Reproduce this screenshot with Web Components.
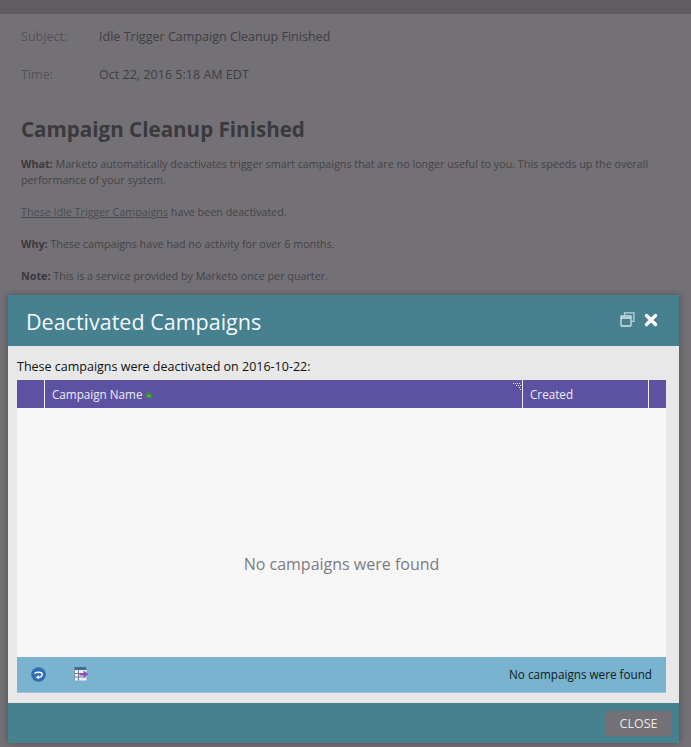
<!DOCTYPE html>
<html>
<head>
<meta charset="utf-8">
<title>Deactivated Campaigns</title>
<style>
  html, body { margin: 0; height: 747px; overflow: hidden; background: #737175; }
  body { font-family: "Open Sans", sans-serif; position: relative; }
</style>
</head>
<body>
<notification-page></notification-page>
<modal-dialog heading="Deactivated Campaigns">
  <campaign-grid note="These campaigns were deactivated on 2016-10-22:" empty="No campaigns were found"></campaign-grid>
</modal-dialog>

<script>
class NotificationPage extends HTMLElement {
  constructor() {
    super();
    this.shadowDOM = this.attachShadow({ mode: 'open' });
    this.shadowDOM.innerHTML = `
      <style>
      :host { display: block; color: #343336; }
      .top { height: 14px; background: #5f5d62; }
      .content { padding: 0 21px; }
      .meta { display: grid; grid-template-columns: 78px 1fr; row-gap: 20px; padding-top: 14px; font-size: 12.55px; line-height: 18px; }
      .label { color: #545257; }
      .value { color: #3f3e42; }
      h1 { margin: 31px 0 0; font-size: 20.6px; line-height: 28px; font-weight: 700; color: #3a393c; }
      p { margin: 0; font-size: 10.75px; line-height: 16px; color: #444347; }
      p b { font-weight: 700; color: #3a393c; }
      u { color: #4d4b52; }
      .first { margin-top: 13px; }
      .next { margin-top: 16px; }
      </style>
      <div class="top"></div>
      <div class="content">
        <div class="meta">
          <span class="label">Subject:</span><span class="value">Idle Trigger Campaign Cleanup Finished</span>
          <span class="label">Time:</span><span class="value">Oct 22, 2016 5:18 AM EDT</span>
        </div>
        <h1>Campaign Cleanup Finished</h1>
        <p class="first"><b>What:</b> Marketo automatically deactivates trigger smart campaigns that are no longer useful to you. This speeds up the overall performance of your system.</p>
        <p class="next"><u>These Idle Trigger Campaigns</u> have been deactivated.</p>
        <p class="next"><b>Why:</b> These campaigns have had no activity for over 6 months.</p>
        <p class="next"><b>Note:</b> This is a service provided by Marketo once per quarter.</p>
      </div>
    `;
  }
}

class ModalDialog extends HTMLElement {
  constructor() {
    super();
    this.shadowDOM = this.attachShadow({ mode: 'open' });
    this.shadowDOM.innerHTML = `
      <style>
      :host {
        position: absolute; left: 8px; top: 295px; width: 671px; height: 448px;
        display: flex; flex-direction: column;
        box-shadow: -2px 0 5px rgba(60,60,60,.35), 2px 0 5px rgba(60,60,60,.35);
      }
      header {
        height: 51px; flex: none; background: #47808f; color: #fff;
        display: flex; align-items: center; padding: 0 21px 0 18px;
      }
      h2 { flex: 1; margin: 0; font-size: 21.5px; font-weight: 400; line-height: 30px; color: #f2f8fa; position: relative; top: 1px; }
      .tools { display: flex; align-items: center; gap: 9px; position: relative; top: -1px; }
      svg { display: block; }
      .body { flex: 1; background: #e8e8e8; padding: 12px 13px 10px 9px; display: flex; min-height: 0; }
      footer {
        height: 40px; box-sizing: border-box; flex: none; background: #47808f;
        display: flex; justify-content: flex-end; align-items: flex-start; padding: 8px 7px 0 0;
      }
      button {
        width: 67px; height: 25px; border: 0; padding: 0; background: #737175; color: #e9e9e9;
        font: 12.5px "Open Sans", sans-serif; 
      }
      </style>
      <header>
        <h2></h2>
        <div class="tools">
          <svg width="15" height="15" viewBox="0 0 15 15" fill="none" stroke="#cfe3e8" stroke-width="1.3">
            <path d="M4.5 3V.9h9.4v8.4h-2.2" stroke="#b9d4db"/>
            <rect x="1" y="4" width="10" height="10" rx=".5"/>
            <path d="M1 6h10" stroke-width="1.6"/>
          </svg>
          <svg width="14" height="14" viewBox="0 0 14 14" stroke="#fff" stroke-width="3.4" stroke-linecap="round">
            <path d="M2.5 2.5l9 9M11.5 2.5l-9 9"/>
          </svg>
        </div>
      </header>
      <div class="body"><slot></slot></div>
      <footer><button>CLOSE</button></footer>
    `;
  }

  connectedCallback() {
    this.shadowDOM.querySelector('h2').textContent = this.getAttribute('heading');
  }
}

class CampaignGrid extends HTMLElement {
  constructor() {
    super();
    this.shadowDOM = this.attachShadow({ mode: 'open' });
  }

  connectedCallback() {
    this.render();
  }

  render() {
    const empty = this.getAttribute('empty');
    this.shadowDOM.innerHTML = `
      <style>
      :host { flex: 1; display: flex; flex-direction: column; font-family: "Open Sans", sans-serif; min-width: 0; }
      .note { font-size: 12.5px; line-height: 18px; height: 22px; color: #111; flex: none; }
      .head {
        flex: none; height: 28px; background: #5c52a1; color: #eeecf6; font-size: 11.7px;
        display: grid; grid-template-columns: 28px 1fr 126px 17px;
      }
      .col { display: flex; align-items: center; padding: 0 0 1px 7px; border-right: 1px solid #f0eff7; gap: 2px; position: relative; }
      .col:first-child { padding: 0; }
      .col:last-child { border-right: 0; }
      .resize { position: absolute; right: 0; top: 2px; }
      .sort { position: relative; top: 1px; }
      .empty {
        flex: 1; background: #f6f6f6; color: #7c7c7f; font-size: 16px;
        display: flex; align-items: center; justify-content: center; padding-top: 62px;
      }
      .bar {
        flex: none; height: 36px; background: #79b3cf; border-bottom: 1px solid #a7bcdc; box-sizing: border-box;
        display: flex; align-items: center; padding: 0 14px 1px 14px; color: #0f1c22; font-size: 11.7px;
      }
      .refresh { margin-right: 28px; }
      .spacer { flex: 1; }
      svg { display: block; }
      </style>
      <div class="note">${this.getAttribute('note')}</div>
      <div class="head">
        <div class="col"></div>
        <div class="col">Campaign Name
          <svg class="sort" width="8" height="8" viewBox="0 0 8 8"><path d="M4 .5L6 2.7H7.5V7H.5V2.7H2Z" fill="#3f8a3f"/><path d="M2.8 5h2.4" stroke="#9fcf94"/></svg>
          <svg class="resize" width="9" height="9" viewBox="0 0 9 9" fill="#e4e2f2">
            <rect x="0" y="1" width="1" height="1"/><rect x="2" y="1" width="1" height="1"/><rect x="4" y="1" width="1" height="1"/><rect x="6" y="1" width="1" height="1"/>
            <rect x="3" y="3" width="1" height="1"/><rect x="5" y="3" width="1" height="1"/><rect x="7" y="3" width="1" height="1"/>
            <rect x="6" y="5" width="1" height="1"/><rect x="7" y="7" width="1" height="1"/>
          </svg>
        </div>
        <div class="col">Created</div>
        <div class="col"></div>
      </div>
      <div class="empty">${empty}</div>
      <div class="bar">
        <svg class="refresh" width="15" height="15" viewBox="0 0 15 15">
          <circle cx="7.5" cy="7.5" r="7.3" fill="#2f6db5"/>
          <path d="M3.8 6.8C4 4.8 11 4.4 11.2 7.2 11.3 9.4 9 10.2 7.4 10.2" fill="none" stroke="#fff" stroke-width="1.5"/>
          <path d="M4.6 10.2L8 8.2V12.2Z" fill="#fff"/>
        </svg>
        <svg width="15" height="14" viewBox="0 0 15 14">
          <rect x=".5" y="0" width="12" height="13.5" fill="#eef0f4"/>
          <rect x=".5" y="0" width="12" height="3" fill="#3f6d94"/>
          <path d="M4.5 3v10.5M.5 6.5h12M.5 10h12" stroke="#6b7d8e" stroke-width="1"/>
          <path d="M0 0v13.5" stroke="#5b6f85" stroke-width="1"/>
          <path d="M5.5 6h4V3.6L14.5 7.2 9.5 10.8V8.4h-4Z" fill="#8c4fc0"/>
        </svg>
        <span class="spacer"></span>
        <span>${empty}</span>
      </div>
    `;
  }
}

customElements.define('notification-page', NotificationPage);
customElements.define('modal-dialog', ModalDialog);
customElements.define('campaign-grid', CampaignGrid);
</script>
</body>
</html>
